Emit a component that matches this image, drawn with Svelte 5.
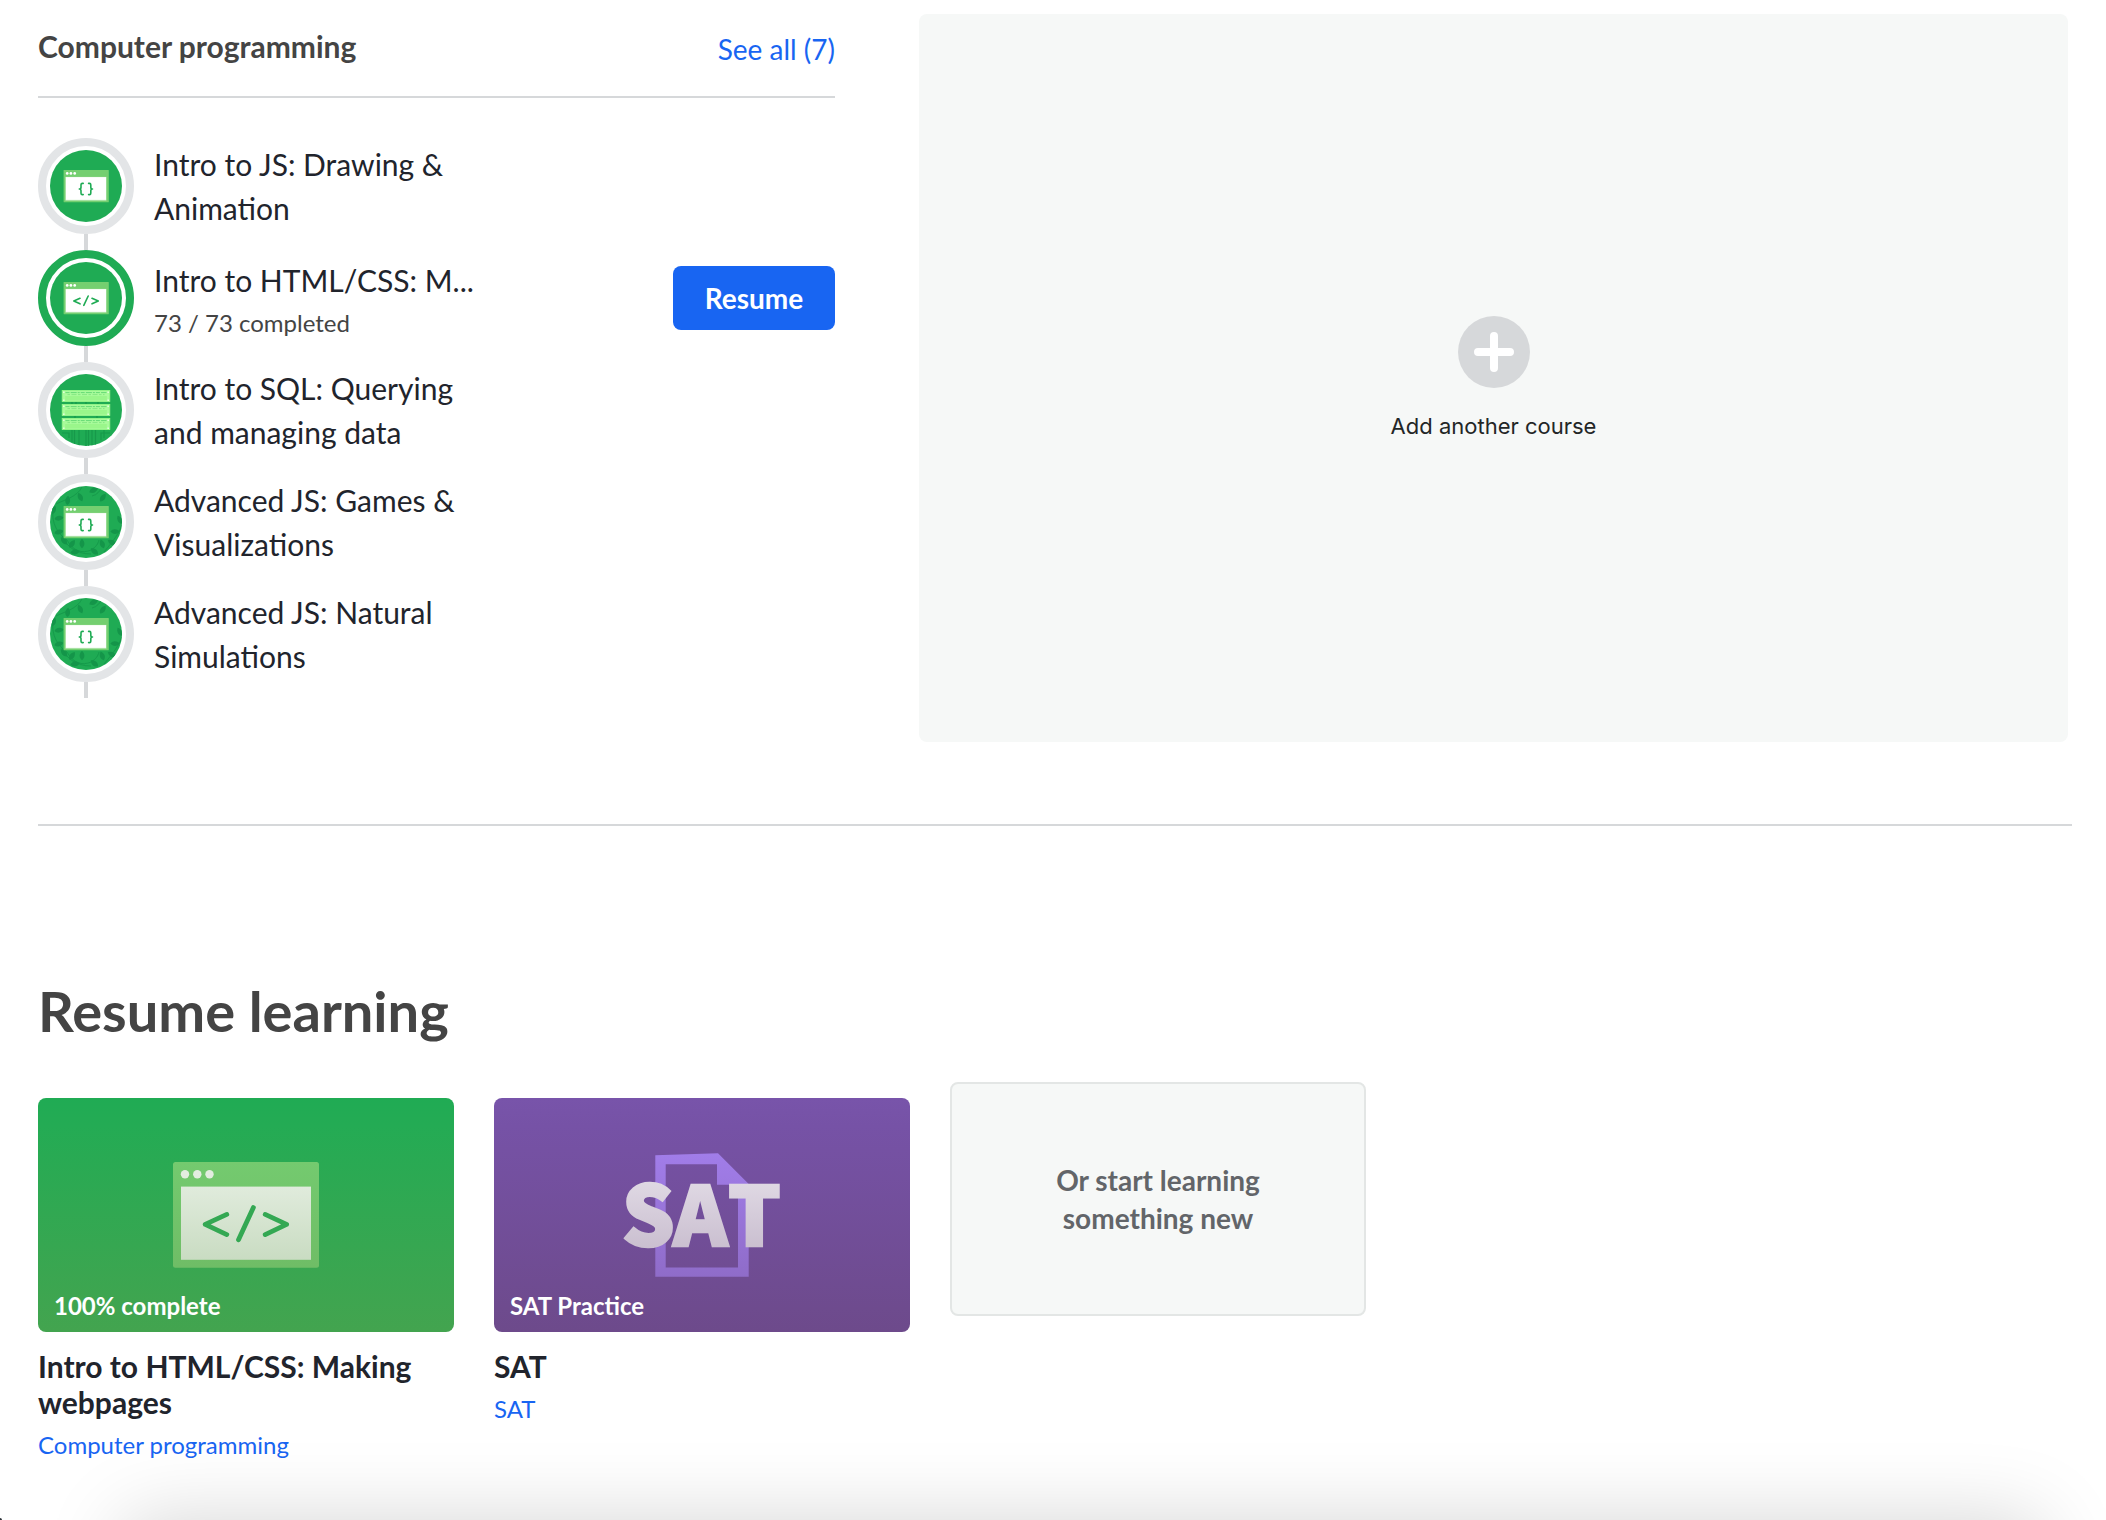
<script lang="ts">
  type Unit = {
    title: string;
    icon: 'braces' | 'tag' | 'sql';
    vines?: boolean;
    progress?: string;
  };

  const units: Unit[] = [
    { title: 'Intro to JS: Drawing & Animation', icon: 'braces' },
    { title: 'Intro to HTML/CSS: M...', icon: 'tag', progress: '73 / 73 completed' },
    { title: 'Intro to SQL: Querying and managing data', icon: 'sql' },
    { title: 'Advanced JS: Games & Visualizations', icon: 'braces', vines: true },
    { title: 'Advanced JS: Natural Simulations', icon: 'braces', vines: true },
  ];

  // x, y, rotation of each leaf behind the advanced JS icons
  const leaves = [
    [17.7, 14.5, 5], [30.3, 11, -25], [43.5, 4.2, 65], [52.8, 11.8, 35],
    [9, 32.2, 80], [8.8, 46, 75], [65, 45.6, 90], [70, 34, -30],
    [62, 56.6, -60], [52.3, 58, -20], [44.5, 65.5, -50], [32, 57.6, 0],
    [22, 58, 35], [25, 66, 80], [14, 55, -40], [3.5, 24, 20],
  ];

  const racks = [16, 30, 44];
</script>

{#snippet unitIcon(unit: Unit)}
  <svg class="unit-icon" viewBox="0 0 72 72" aria-hidden="true">
    {#if unit.vines}
      <g fill="none" stroke="#149549" stroke-width="0.8">
        <path d="M6 18C14 14 27 11 32 1" />
        <path d="M3 22C1 38 8 48 17 54C23 65 32 68 41 64C46 61 48 58 49 54" />
        <path d="M12 50C16 60 26 68 41 68" />
        <path d="M72 38C70 46 64 54 54 66" />
        <path d="M42 10C47 9 50 5 52 1" />
      </g>
      {#each leaves as [x, y, turn]}
        <path class="leaf" d="M0-4.8C3.2-1.6 3.2 2 0 4.6C-3.2 2-3.2-1.6 0-4.8Z" transform="translate({x} {y}) rotate({turn})" />
      {/each}
    {/if}

    {#if unit.icon === 'sql'}
      <g fill="none" stroke="#17994a" stroke-width="1.2">
        <path d="M22 56V68M24.5 56V70M29 56V72M36 56V72M38.5 56V72M42 56V72M45.5 56V71M54 56V64" />
        <path d="M12 59H19V64M60 59H51V66M22 28V30M26 28V30M36 28V30M48 28V30M25 42V44M47 42V44" />
      </g>
      {#each racks as y}
        <rect x="11.8" {y} width="48.4" height="12" rx="0.6" fill="#a9fb9b" />
        <rect x="12.4" y={y + 0.6} width="47.2" height="10.8" fill="none" stroke="#8af183" stroke-width="0.8" />
        <rect x="15.2" y={y + 6} width="41.6" height="4.4" fill="#9af68b" />
        <path d="M15.5 {y + 2.6}H56.5" stroke="#54d06c" stroke-width="0.8" stroke-dasharray="4 1.2 6 1 2 1" />
        <path d="M17.5 {y + 4.6}H54.5" stroke="#7be27c" stroke-width="0.8" stroke-dasharray="2.5 1.5 5 1.5" />
        <path d="M13 {y + 2.2}h1.6M13 {y + 10.2}h1.6M57.4 {y + 2.2}h1.6M57.4 {y + 10.2}h1.6" stroke="#e2ffdc" stroke-width="1.6" />
      {/each}
    {:else}
      <rect x="13.6" y="20" width="45.2" height="32.3" rx="0.6" fill="#74cf70" />
      <rect x="15.4" y="26.9" width="41" height="23.7" fill="#c9edc6" />
      <rect x="16" y="27.2" width="40" height="22.6" fill="#fff" />
      <g fill="#fff">
        <circle cx="17.2" cy="23.4" r="1.35" />
        <circle cx="20.9" cy="23.4" r="1.35" />
        <circle cx="24.7" cy="23.4" r="1.35" />
      </g>
      <g class="glyph">
        {#if unit.icon === 'braces'}
          <path d="M33.2 33.4H32.4Q31 33.4 31 34.8V37.2Q31 39 29.3 39Q31 39 31 40.8V43.2Q31 44.6 32.4 44.6H33.2" />
          <path d="M38.6 33.4H39.4Q40.8 33.4 40.8 34.8V37.2Q40.8 39 42.5 39Q40.8 39 40.8 40.8V43.2Q40.8 44.6 39.4 44.6H38.6" />
        {:else}
          <path d="M30 36.3L23.8 39L30 41.8M38.2 34L33.8 43.4M42 36.3L48.3 39L42 41.8" />
        {/if}
      </g>
    {/if}
  </svg>
{/snippet}

<main class="page">
  <section class="courses">
    <div class="course">
      <header class="course-header">
        <h3>Computer programming</h3>
        <a class="see-all" href="#all">See all (7)</a>
      </header>

      <ul class="units">
        {#each units as unit}
          <li class="unit">
            <div class="track">
              <div class="ring" class:ring-active={unit.progress}>
                {@render unitIcon(unit)}
              </div>
              <div class="connector"></div>
            </div>
            <div class="unit-row">
              <div class="unit-text" class:unit-text-progress={unit.progress}>
                <div class="unit-title">{unit.title}</div>
                {#if unit.progress}
                  <div class="unit-progress">{unit.progress}</div>
                {/if}
              </div>
              {#if unit.progress}
                <button class="resume">Resume</button>
              {/if}
            </div>
          </li>
        {/each}
      </ul>
    </div>

    <div class="add-course">
      <svg class="plus" viewBox="0 0 72 72" aria-hidden="true">
        <circle cx="36" cy="36" r="36" fill="#d6d8da" />
        <path d="M36 20V52M20 36H52" stroke="#fff" stroke-width="8" stroke-linecap="round" />
      </svg>
      <span>Add another course</span>
    </div>
  </section>

  <section class="learning">
    <h2>Resume learning</h2>

    <div class="cards">
      <article class="card">
        <div class="thumb thumb-green">
          <svg class="art" viewBox="0 0 416 234" aria-hidden="true">
            <defs>
              <linearGradient id="window-frame" x1="0" y1="0" x2="0" y2="1">
                <stop offset="0" stop-color="#74ca6f" />
                <stop offset="1" stop-color="#6fbd66" />
              </linearGradient>
              <linearGradient id="window-body" x1="0" y1="0" x2="0" y2="1">
                <stop offset="0" stop-color="#e0ebdc" />
                <stop offset="1" stop-color="#c9dcc2" />
              </linearGradient>
            </defs>
            <rect x="135" y="64" width="146" height="105.8" rx="2.5" fill="url(#window-frame)" />
            <rect x="143" y="88.6" width="130" height="73.2" fill="url(#window-body)" />
            <g fill="#e3ede0">
              <circle cx="147" cy="76.3" r="4.2" />
              <circle cx="159.3" cy="76.3" r="4.2" />
              <circle cx="171.5" cy="76.3" r="4.2" />
            </g>
            <path
              d="M188.8 116.4L167.2 126.4L188.8 136.6M215.4 109.6L200.5 141.8M227.2 116.4L248.6 126.4L227.2 136.6"
              fill="none" stroke="#34a853" stroke-width="4.8" stroke-linecap="round" stroke-linejoin="round"
            />
          </svg>
          <span class="thumb-label">100% complete</span>
        </div>
        <h4>Intro to HTML/CSS: Making webpages</h4>
        <a class="subject" href="#computing">Computer programming</a>
      </article>

      <article class="card">
        <div class="thumb thumb-purple">
          <svg class="art" viewBox="0 0 416 234" aria-hidden="true">
            <defs>
              <linearGradient id="sheet" x1="0" y1="0" x2="0" y2="1">
                <stop offset="0" stop-color="#a17de9" />
                <stop offset="1" stop-color="#8f6cc9" />
              </linearGradient>
              <linearGradient id="letters" gradientUnits="userSpaceOnUse" x1="0" y1="85" x2="0" y2="150">
                <stop offset="0" stop-color="#dfd8e3" />
                <stop offset="1" stop-color="#cabfd0" />
              </linearGradient>
            </defs>
            <path
              d="M161.3 57.3L224 55.3L254.7 86V178.8H161.3ZM171.7 66.3V169.4H244V86.7H223V66.3Z"
              fill="url(#sheet)" fill-rule="evenodd"
            />
            <text class="sat" x="128.1 179.2 234" y="147.5" fill="url(#letters)" stroke="url(#letters)">SAT</text>
          </svg>
          <span class="thumb-label">SAT Practice</span>
        </div>
        <h4>SAT</h4>
        <a class="subject" href="#sat">SAT</a>
      </article>

      <a class="new-course" href="#explore">Or start learning<br />something new</a>
    </div>
  </section>

  <div class="sheet-shadow"></div>
  <div class="corner"></div>
</main>

<style>
  :global(body) {
    margin: 0;
    background: #fff;
  }

  .page {
    position: relative;
    box-sizing: border-box;
    width: 2106px;
    height: 1520px;
    padding: 14px 34px 0 38px;
    overflow: hidden;
    font-family: Lato, 'Noto Sans', sans-serif;
    color: #21242c;
  }

  h2, h3, h4, ul {
    margin: 0;
    padding: 0;
  }
  a {
    color: #1865f2;
    text-decoration: none;
  }

  .courses {
    display: flex;
    justify-content: space-between;
    height: 810px;
    padding-right: 4px;
  }
  .course {
    width: 797px;
  }
  .course-header {
    display: flex;
    justify-content: space-between;
    align-items: flex-start;
    box-sizing: border-box;
    height: 84px;
    padding-top: 14px;
    border-bottom: 2px solid #d6d8da;
  }
  h3 {
    font-size: 30px;
    line-height: 36px;
    font-weight: 700;
    color: #444;
  }
  .see-all {
    margin-top: 4px;
    font-size: 28px;
    line-height: 34px;
  }

  .units {
    padding-top: 40px;
    list-style: none;
  }
  .unit {
    display: flex;
    gap: 20px;
  }
  .track {
    display: flex;
    flex-direction: column;
    align-items: center;
  }
  .ring {
    box-sizing: border-box;
    width: 96px;
    height: 96px;
    padding: 4px;
    border: 8px solid #e3e5e7;
    border-radius: 50%;
  }
  .ring-active {
    border-color: #1fab54;
  }
  .unit-icon {
    display: block;
    width: 72px;
    height: 72px;
    border-radius: 50%;
    background: #1fab54;
  }
  .leaf {
    fill: #149549;
  }
  .glyph {
    fill: none;
    stroke: #1fab54;
    stroke-width: 1.6;
    stroke-linecap: round;
    stroke-linejoin: round;
  }
  .connector {
    width: 4px;
    height: 16px;
    background: #d6d8da;
  }
  .unit-row {
    display: flex;
    flex: 1;
    justify-content: space-between;
    align-items: center;
    height: 96px;
  }
  .unit-text {
    width: 328px;
  }
  .unit-text-progress {
    padding-top: 3px;
  }
  .unit-title {
    font-size: 30px;
    line-height: 44px;
  }
  .unit-progress {
    margin-top: 3px;
    font-size: 24px;
    line-height: 36px;
    color: #444;
  }
  .resume {
    width: 162px;
    height: 64px;
    padding: 0 0 1px;
    border: 0;
    border-radius: 8px;
    background: #1865f2;
    font: 700 28px/62px Lato, 'Noto Sans', sans-serif;
    color: #fff;
  }

  .add-course {
    display: flex;
    flex-direction: column;
    align-items: center;
    justify-content: center;
    gap: 25px;
    box-sizing: border-box;
    width: 1149px;
    height: 728px;
    padding-bottom: 1px;
    border-radius: 8px;
    background: #f6f8f7;
    font: 22px/26px Inter, 'Noto Sans', sans-serif;
    color: #232626;
  }
  .plus {
    width: 72px;
    height: 72px;
  }

  .learning {
    padding-top: 151px;
    border-top: 2px solid #d6d8da;
  }
  h2 {
    font-size: 56px;
    line-height: 68px;
    font-weight: 700;
    color: #444;
  }
  .cards {
    display: flex;
    align-items: flex-start;
    gap: 40px;
    padding-top: 37px;
  }
  .card {
    width: 416px;
    padding-top: 16px;
  }
  .thumb {
    position: relative;
    height: 234px;
    border-radius: 8px;
    overflow: hidden;
  }
  .thumb-green {
    background: linear-gradient(#20ab54, #24ab54 12%, #43a44f);
  }
  .thumb-purple {
    background: linear-gradient(#7854aa, #7652a6 12%, #6d4a8b);
  }
  .art {
    display: block;
    width: 416px;
    height: 234px;
  }
  .sat {
    font-family: 'Noto Sans CJK JP', 'Noto Sans', sans-serif;
    font-size: 82.5px;
    font-weight: 900;
    stroke-width: 2.6px;
  }
  .thumb-label {
    position: absolute;
    left: 16px;
    bottom: 12px;
    font-size: 24px;
    line-height: 29px;
    font-weight: 700;
    color: #fff;
  }
  h4 {
    margin-top: 16px;
    font-size: 30px;
    line-height: 36px;
    font-weight: 700;
  }
  .subject {
    display: block;
    margin-top: 9px;
    font-size: 24px;
    line-height: 32px;
  }
  .new-course {
    display: flex;
    align-items: center;
    justify-content: center;
    box-sizing: border-box;
    width: 416px;
    height: 234px;
    border: 2px solid #e3e6e5;
    border-radius: 8px;
    background: #f6f8f7;
    font-size: 28px;
    line-height: 38px;
    font-weight: 700;
    text-align: center;
    color: #626569;
  }

  /* top shadow of the panel docked under the viewport */
  .sheet-shadow {
    position: absolute;
    left: 124px;
    right: 64px;
    bottom: -200px;
    height: 200px;
    border-radius: 16px;
    box-shadow: 0 0 80px rgba(0, 0, 0, 0.17);
    pointer-events: none;
  }
  .corner {
    position: absolute;
    left: 0;
    bottom: 0;
    width: 2px;
    height: 2px;
    border-top-right-radius: 2px;
    background: #2b3036;
  }
</style>
